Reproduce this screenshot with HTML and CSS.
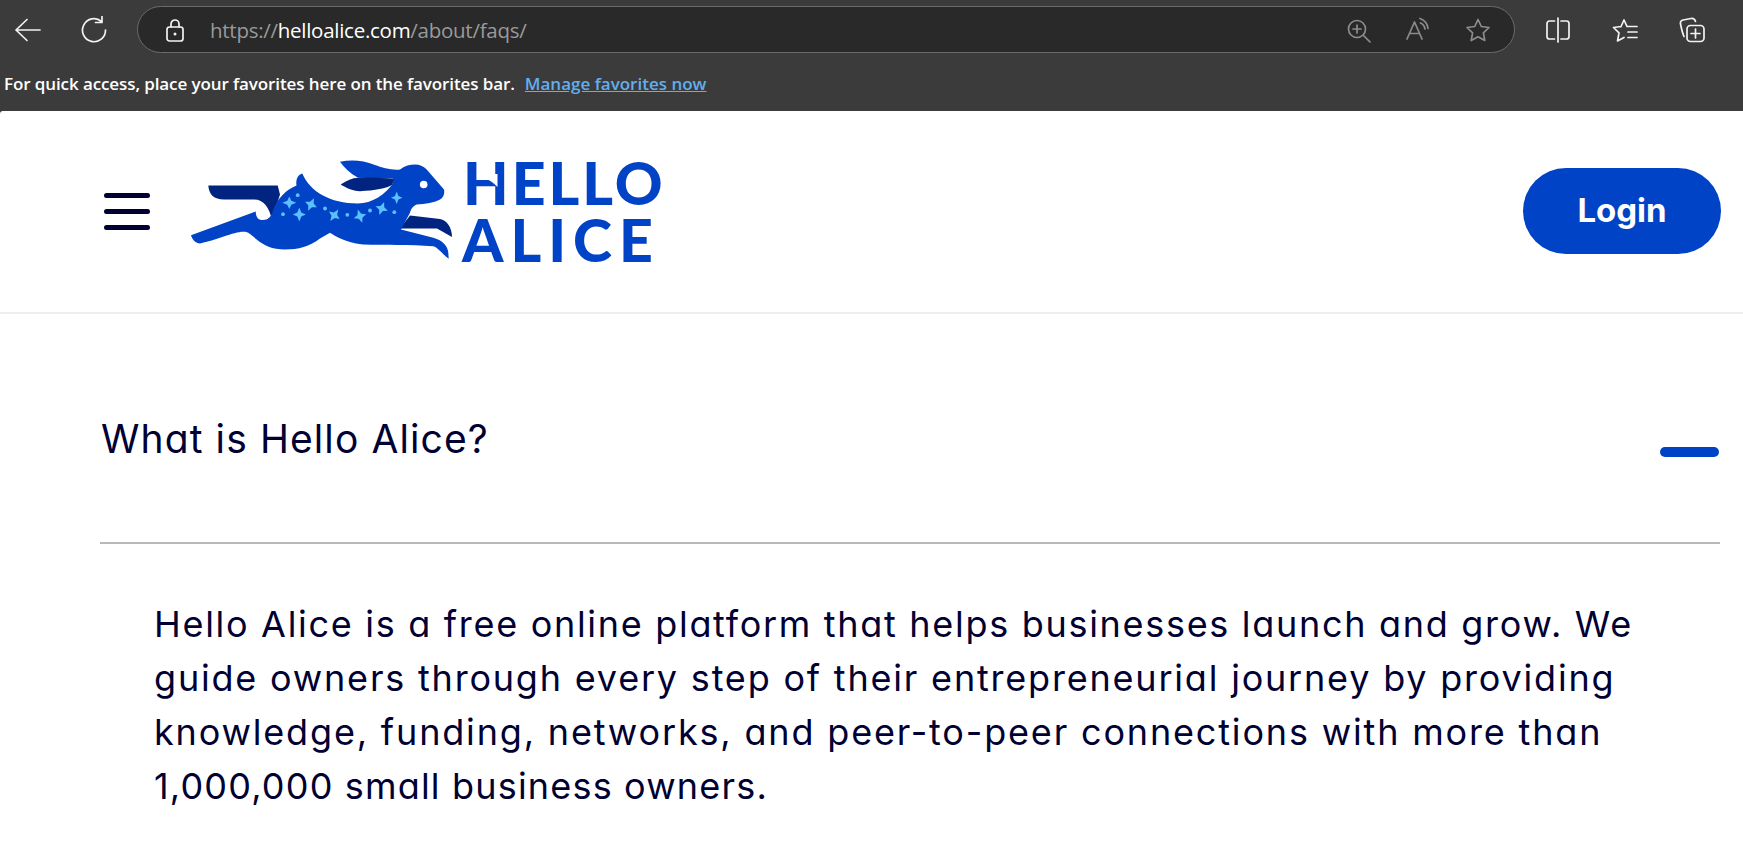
FILE: index.html
```html
<!DOCTYPE html>
<html lang="en">
<head>
<meta charset="utf-8">
<title>Hello Alice FAQs</title>
<link rel="stylesheet" href="styles.css">
</head>
<body>
<div class="chrome">
  <div class="toolbar">
    <svg class="ic ic-back" viewBox="0 0 28 28"><path d="M27 14H3M14 3.500L3 14l11 10.500"/></svg>
    <svg class="ic ic-reload" viewBox="0 0 28 28"><path d="M21.500 5.500A11.500 11.500 0 1 0 25.500 14M22 0.500v6h-6.500"/></svg>
    <div class="address">
      <svg class="ic ic-lock" viewBox="0 0 18 24"><rect x="1" y="9" width="16" height="14" rx="2.500"/><path d="M5 9V6a4 4 0 0 1 8 0v3"/><circle class="fill" cx="9" cy="16" r="1.500"/></svg>
      <span class="url">https://<b>helloalice.com</b>/about/faqs/</span>
      <div class="addr-icons">
        <svg class="ic dim" viewBox="0 0 26 26"><circle cx="12" cy="12" r="8.500"/><path d="M18.500 18.500L25 25M12 8v8M8 12h8"/></svg>
        <svg class="ic dim" viewBox="0 0 26 26"><path d="M2 22L9.500 5 17 22M4.500 16.500h10M15 1.500c4 1.500 7.500 5 8 10M15.500 6c2.500 1 4 3 4.500 6"/></svg>
        <svg class="ic dim" viewBox="0 0 26 26"><path d="M13 2.500l3.300 7 7.700 1-5.600 5.300 1.400 7.700-6.800-3.800-6.800 3.800 1.400-7.700L2 10.500l7.700-1z"/></svg>
      </div>
    </div>
    <div class="tools">
      <svg class="ic" viewBox="0 0 26 26"><path d="M9.500 4H4.500a2.500 2.500 0 0 0-2.500 2.500v13A2.500 2.500 0 0 0 4.500 22H9.500M16 4h5.500A2.500 2.500 0 0 1 24 6.500v13a2.500 2.500 0 0 1-2.500 2.500H16M13 1v24"/></svg>
      <svg class="ic" viewBox="0 0 26 26"><path d="M12 3l2.800 6M9 9.500l-7.500 1 5.500 5.300L5.500 24l6.500-3.500M12 3L9 9.500M15 9.500h10M16 15h9M16 20.500h9"/></svg>
      <svg class="ic" viewBox="0 0 26 26"><rect x="8" y="8.500" width="17" height="16" rx="3.500"/><path d="M16.500 12v9M12 16.500h9M5 19.500C3.500 16 2.500 12 1.500 7c-.4-2 .7-3.500 2.500-4l8-1.500c2-.3 3.800.6 4.500 3"/></svg>
    </div>
  </div>
  <div class="favbar">For quick access, place your favorites here on the favorites bar.<a class="favlink">Manage favorites now</a></div>
</div>
<div class="page">
  <header class="site-head">
    <div class="burger"><i></i><i></i><i></i></div>
    <svg class="rabbit" viewBox="185 154.500 280 115">
      <path class="dark" d="M208.300 186H277.700L280 195 272 220C269 208 264 200 254 200H224C214 200 209 195 208.300 186Z"/>
      <path class="dark" d="M410 216L440 219.500C447 221 452 228 452 237.500L437 229 400 229Z"/>
      <path class="blue" d="M191 235.700L255.700 212C256 219 259 220.500 263 220.500 268 220.500 271 217 272.300 213 277 198 287 190 296.500 186 295.500 180 298 175 302.300 174 310 192 330 204 358 204 372 204 385 195 393 184V179L358 178.300C350 174 344 168 340 162.300 352 160 363 161 375 165.500 382 168 392 171 400 170 405 166 410 165 415 165 420 165 424 167 426.700 170L444 190C445 195 443 198 440 200 435 203 425 204.500 416.700 205 412 207 411 210 410 213.300L401 230 433.300 238.300C443 241 448 247 448.300 253.300L448.700 259.300C442 254 438 248 433.300 246.700 410 245 385 246 363.300 245 352 244 342 241 330 233.300L320 239C310 247 298 250 285 250 272 250 264 246 256.700 240 251 235 248 232 243.300 232.300 235 232 215 241 200 244 196 244 192 240 191 235.700Z"/>
      <path class="dark" d="M340.700 185C347 181 352 178.500 358.300 178.300 370 177.500 382 178.500 393.300 179.300L392.700 185C386 189 375 191 360 191.700 352 191.500 346 188 340.700 185Z"/>
      <circle class="eye" cx="423.700" cy="185" r="3.800"/>
      <g class="stars">
        <path d="M289.300 197l2 4.300 5 2-5 2-2 4.300-2-4.300-5-2 5-2z"/>
        <path d="M299.300 208l2 5 4.500 2-4.500 2-2 5-2-5-4.500-2 4.500-2z"/>
        <path transform="rotate(25 311 205)" d="M311 198l2 5 4.500 2-4.500 2-2 5-2-5-4.500-2 4.500-2z"/>
        <path transform="rotate(35 334.300 215.700)" d="M334.300 208.700l2 5 4.500 2-4.500 2-2 5-2-5-4.500-2 4.500-2z"/>
        <path transform="rotate(-18 360 216.700)" d="M360 209.700l2 5 4.500 2-4.500 2-2 5-2-5-4.500-2 4.500-2z"/>
        <path transform="rotate(20 381.700 209)" d="M381.700 202l2 5 4.500 2-4.500 2-2 5-2-5-4.500-2 4.500-2z"/>
        <path d="M396.700 192l1.700 4.600 4 1.700-4 1.700-1.700 4.600-1.700-4.600-4-1.700 4-1.700z"/>
        <circle cx="297.700" cy="195.700" r="1.900"/><circle cx="283" cy="214.700" r="1.900"/>
        <circle cx="325" cy="209" r="1.900"/><circle cx="347.300" cy="215.300" r="1.900"/>
        <circle cx="370" cy="211" r="1.900"/><circle cx="394.300" cy="212.700" r="1.900"/>
      </g>
    </svg>
    <div class="wordmark">
      <span class="wm-top">HELLO<svg class="wm-cut" viewBox="463 154 60 57"><path d="M479 174V177.500C487 178 493 182 497.500 187V174Z"/></svg></span>
      <span class="wm-bot">ALICE</span>
    </div>
    <button class="login">Login</button>
  </header>
  <main class="faq">
    <div class="faq-q">
      <h1>What is Hello Alice?</h1>
      <span class="minus"></span>
    </div>
    <p class="faq-a">
      <span class="ln ln1">Hello Alice is a free online platform that helps businesses launch and grow. We</span>
      <span class="ln ln2">guide owners through every step of their entrepreneurial journey by providing</span>
      <span class="ln ln3">knowledge, funding, networks, and peer-to-peer connections with more than</span>
      <span class="ln ln4">1,000,000 small business owners.</span>
    </p>
  </main>
</div>
</body>
</html>
```
FILE: styles.css
```css
* { box-sizing: border-box; }
html, body { margin: 0; height: 100%; }
body { width: 1743px; height: 865px; overflow: hidden; background: #3b3b3b; font-family: "Inter", "Liberation Sans", sans-serif; }

.chrome { height: 111px; background: #3b3b3b; }
.toolbar { height: 59px; display: flex; align-items: center; padding-left: 14px; }
.ic { display: block; width: 26px; height: 26px; fill: none; stroke: #f2f2f2; stroke-width: 1.700; stroke-linecap: round; stroke-linejoin: round; flex: none; }
.ic .fill { fill: #f2f2f2; stroke: none; }
.ic.dim { stroke: #8c8c8c; }
.ic-back { width: 28px; height: 28px; margin-left: -1px; margin-right: 1px; }
.ic-reload { width: 28px; height: 28px; margin-left: 38px; }
.ic-lock { width: 18px; height: 24px; }

.address { width: 1378px; height: 47px; margin-left: 29px; display: flex; align-items: center; padding-left: 28px; padding-right: 23px; background: #292929; border: 1.500px solid #6b6b6b; border-radius: 24px; }
.url { margin-left: 26px; font-family: "Open Sans", sans-serif; font-size: 20.500px; letter-spacing: -0.270px; color: #9a9a9a; white-space: nowrap; }
.url b { font-weight: 400; color: #fff; }
.addr-icons { margin-left: auto; display: flex; gap: 34px; }
.tools { margin-left: 30px; display: flex; gap: 41px; }

.favbar { height: 52px; display: flex; align-items: center; padding-left: 4px; padding-bottom: 3px; font-family: "Open Sans", sans-serif; font-size: 17px; font-weight: 600; letter-spacing: -0.100px; color: #fff; white-space: nowrap; }
.favlink { margin-left: 10px; letter-spacing: 0; color: #62aef0; text-decoration: underline; }

.page { height: 754px; background: #fff; border-radius: 3px 0 0 0; color: #000033; }
.site-head { height: 203px; display: flex; align-items: center; padding: 0 22px 1px 104px; border-bottom: 2px solid #eeeeee; }
.burger { width: 46px; display: flex; flex-direction: column; gap: 11px; }
.burger i { display: block; height: 5px; background: #000033; border-radius: 3px; }
.rabbit { display: block; width: 280px; height: 115px; margin-left: 35px; flex: none; }
.blue { fill: #0043c6; }
.dark { fill: #00247f; }
.eye { fill: #fff; }
.stars { fill: #5cc0ff; }
.wordmark { display: flex; flex-direction: column; margin-left: -2px; color: #0043c6; font-family: "Lato", sans-serif; font-size: 59px; font-weight: 900; line-height: 57px; }
.wordmark span { display: block; }
.wm-top { position: relative; letter-spacing: 3px; }
.wm-cut { position: absolute; left: 0; top: 0; width: 60px; height: 57px; fill: #fff; }
.wm-bot { letter-spacing: 7px; margin-left: -1px; }
.login { margin-left: auto; width: 198px; height: 86px; padding: 0 0 3px; border: 0; border-radius: 43px; background: #0043c6; color: #fff; font-family: inherit; font-size: 33px; font-weight: 700; }

.faq { padding: 0 23px 0 100px; }
.faq-q { height: 230px; display: flex; justify-content: space-between; padding-top: 100px; border-bottom: 2px solid #b9b9b9; }
.faq-q h1 { margin: 0; padding-left: 1px; font-size: 39px; line-height: 50px; font-weight: 400; font-feature-settings: "cv11"; letter-spacing: 1.100px; }
.minus { width: 59px; height: 10px; margin-top: 33px; margin-right: 1px; border-radius: 5px; background: #0043c6; }
.faq-a { margin: 0; padding: 53px 0 0 54px; font-size: 36px; line-height: 54px; font-feature-settings: "cv11"; white-space: nowrap; }
.ln { display: block; }
.ln1 { letter-spacing: 1.700px; }
.ln2 { letter-spacing: 1.800px; }
.ln3 { letter-spacing: 1.830px; }
.ln4 { letter-spacing: 1.180px; }
```
